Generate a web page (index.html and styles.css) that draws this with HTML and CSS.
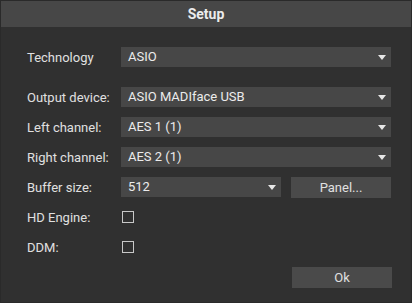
FILE: index.html
```html
<!doctype html>
<html lang="en">
  <head>
    <meta charset="UTF-8" />
    <title>Setup</title>
    <link rel="stylesheet" href="styles.css">
  </head>
  <body>
    <div class="dialog">
      <div class="titlebar">Setup</div>
      <div class="content">
        <div class="row">
          <span class="label">Technology</span>
          <div class="select">ASIO<span class="arrow"></span></div>
        </div>
        <div class="row first">
          <span class="label">Output device:</span>
          <div class="select">ASIO MADIface USB<span class="arrow"></span></div>
        </div>
        <div class="row">
          <span class="label">Left channel:</span>
          <div class="select">AES 1 (1)<span class="arrow"></span></div>
        </div>
        <div class="row">
          <span class="label">Right channel:</span>
          <div class="select">AES 2 (1)<span class="arrow"></span></div>
        </div>
        <div class="row">
          <span class="label">Buffer size:</span>
          <div class="split">
            <div class="select short">512<span class="arrow"></span></div>
            <button class="btn">Panel...</button>
          </div>
        </div>
        <div class="row">
          <span class="label">HD Engine:</span>
          <span class="check"></span>
        </div>
        <div class="row">
          <span class="label">DDM:</span>
          <span class="check"></span>
        </div>
        <div class="footer">
          <button class="btn">Ok</button>
        </div>
      </div>
    </div>
  </body>
</html>
```

FILE: styles.css
```css
body {
  margin: 0;
  background-color: #303030;
  font-family: Roboto, "Noto Sans", sans-serif;
  color: #e2e2e2;
}
.dialog {
  width: 412px;
  height: 303px;
  box-sizing: border-box;
  border: 1px solid #2a2a2a;
  background-color: #303030;
}
.titlebar {
  height: 26px;
  background-color: #474747;
  text-align: center;
  font-weight: bold;
  font-size: 14px;
  line-height: 26px;
  color: #ececec;
}
.content {
  padding: 20px 19px 0 26px;
  display: flex;
  flex-direction: column;
  gap: 10px;
}
.row {
  display: grid;
  grid-template-columns: 94px 270px;
  align-items: center;
  height: 20px;
  font-size: 13px;
}
.row.first {
  margin-top: 10px;
}
.label {
  color: #e0e0e0;
}
.select {
  position: relative;
  height: 20px;
  line-height: 20px;
  background-color: #474747;
  padding-left: 7px;
  color: #ececec;
}
.arrow {
  position: absolute;
  right: 5px;
  top: 8px;
  width: 0;
  height: 0;
  border-left: 4px solid transparent;
  border-right: 4px solid transparent;
  border-top: 5px solid #e8e8e8;
}
.split {
  display: flex;
  gap: 10px;
}
.select.short {
  width: 153px;
}
.btn {
  width: 100px;
  height: 21px;
  border: none;
  background-color: #4a4a4a;
  color: #e0e0e0;
  font-family: Roboto, "Noto Sans", sans-serif;
  font-size: 13px;
  padding: 0;
}
.check {
  width: 10px;
  height: 10px;
  margin-left: 1px;
  border: 1px solid #c8c8c8;
}
.footer {
  display: flex;
  justify-content: flex-end;
}
```
